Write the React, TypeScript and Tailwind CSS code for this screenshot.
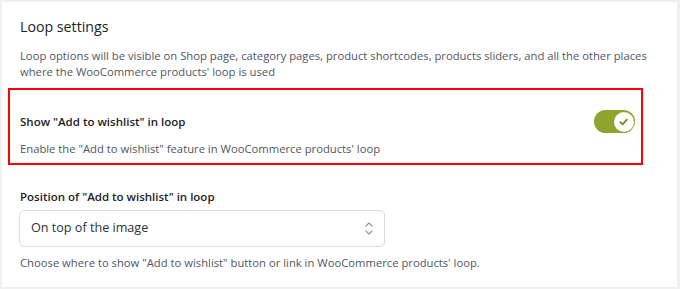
const font = { fontFamily: '"Open Sans", "Noto Sans", sans-serif' };

const Toggle = ({ on }: { on: boolean }) => (
  <div
    className={`flex h-[23px] w-[41px] items-center rounded-full px-[1.5px] ${on ? 'justify-end bg-[#8ea52d]' : 'justify-start bg-gray-300'}`}
  >
    <div className="flex h-[20px] w-[20px] items-center justify-center rounded-full bg-white">
      <svg width="9" height="8" viewBox="0 0 9 8" fill="none">
        <path d="M1.2 4.2 L3.6 6.4 L7.8 1.6" stroke="#6f8a1c" strokeWidth="1.8" strokeLinecap="round" strokeLinejoin="round" />
      </svg>
    </div>
  </div>
)

const UpDown = () => (
  <svg width="8" height="13" viewBox="0 0 8 13" fill="none">
    <path d="M0.8 4.2 L4 1 L7.2 4.2" stroke="#8c8f94" strokeWidth="1.1" strokeLinecap="round" strokeLinejoin="round" />
    <path d="M0.8 8.8 L4 12 L7.2 8.8" stroke="#8c8f94" strokeWidth="1.1" strokeLinecap="round" strokeLinejoin="round" />
  </svg>
)

export default function App() {
  return (
    <div className="h-[289px] w-[680px] bg-[#f0f0f1] pl-[2px] pr-[3px] pt-[2px]" style={font}>
      <div className="flex h-[285px] flex-col bg-white pl-[6px] pr-[6px] pt-[15px]">
        {/* Section header */}
        <div className="pl-[12px] pr-[10px]">
          <h2 className="text-[14.2px] leading-[20px] text-[#1d2327]">Loop settings</h2>
          <p className="mt-[11px] text-[11.25px] leading-[16px] text-[#50575e]">
            Loop options will be visible on Shop page, category pages, product shortcodes, products sliders, and all the other places where the WooCommerce products' loop is used
          </p>
        </div>

        {/* Highlighted option */}
        <div className="mr-[28px] mt-[8px] flex h-[77px] items-start justify-between border-2 border-[#f00] pl-[10px] pr-[6px]">
          <div className="pt-[24px]">
            <div className="text-[11.5px] font-semibold leading-[16px] text-[#1d2327]">Show "Add to wishlist" in loop</div>
            <div className="mt-[11px] text-[11.25px] leading-[16px] text-[#50575e]">
              Enable the "Add to wishlist" feature in WooCommerce products' loop
            </div>
          </div>
          <div className="pt-[20px]">
            <Toggle on />
          </div>
        </div>

        {/* Position select */}
        <div className="pl-[12px] pt-[24px]">
          <div className="text-[11.5px] font-semibold leading-[16px] text-[#1d2327]">Position of "Add to wishlist" in loop</div>
          <div className="ml-[-1px] mt-[5px] flex h-[37px] w-[366px] items-center justify-between rounded-[5px] border border-[#d6dce4] pl-[11px] pr-[11px]">
            <span className="text-[12.6px] text-[#2c3338]">On top of the image</span>
            <UpDown />
          </div>
          <p className="mt-[8px] text-[11.25px] leading-[16px] text-[#50575e]">
            Choose where to show "Add to wishlist" button or link in WooCommerce products' loop.
          </p>
        </div>
      </div>
    </div>
  )
}
